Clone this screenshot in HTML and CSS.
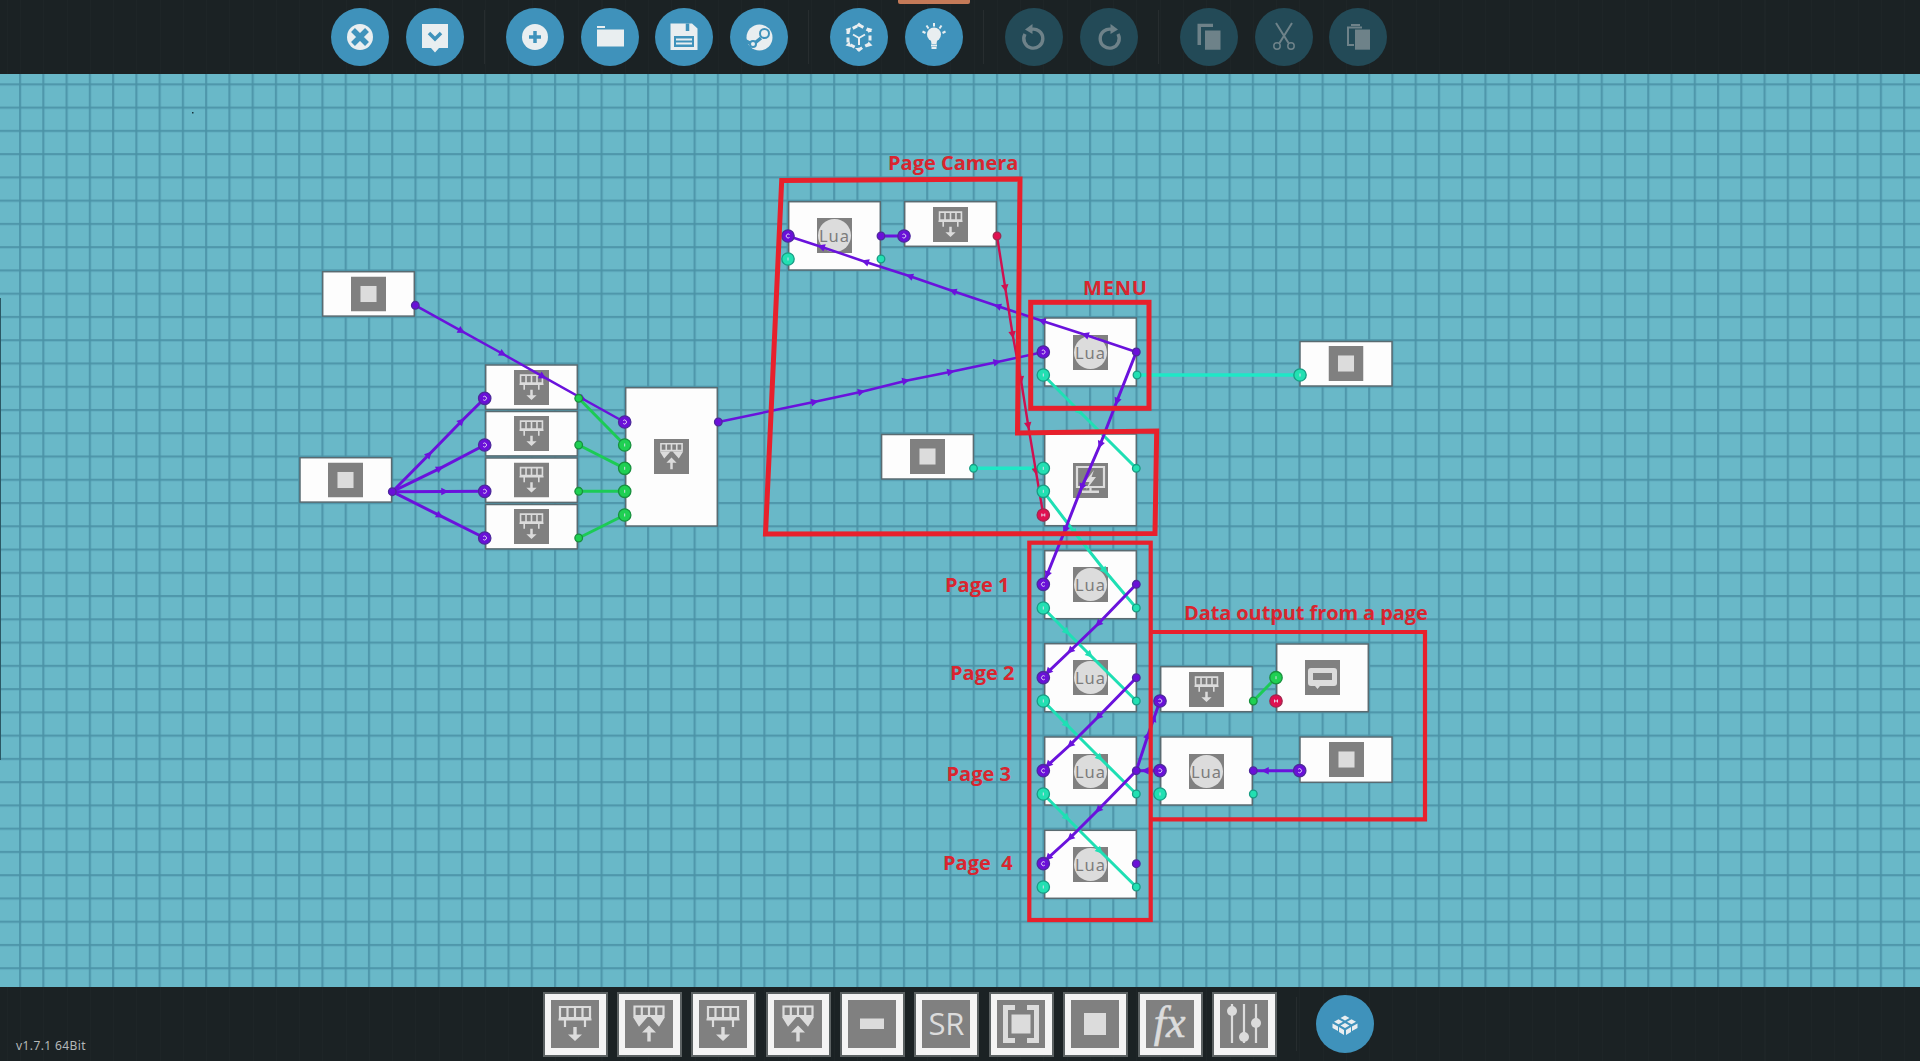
FILE: index.html
```html
<!DOCTYPE html>
<html lang="en">
<head>
<meta charset="utf-8">
<title>Node editor</title>
<link rel="stylesheet" href="styles.css">
</head>
<body>
<svg class="defs" width="0" height="0" aria-hidden="true">
  <defs>
    <symbol id="mem-in" viewBox="0 0 48 48">
      <rect class="ico-bg" width="48" height="48"/>
      <path class="ico-line" d="M9 7H39V18H9ZM16.500 7V18M24 7V18M31.500 7V18M7.500 19.500H40.500M14 19.500V27M34 19.500V27"/>
      <path class="ico-fill" d="M22.300 27H25.700V34.500H31L24 41L17 34.500H22.300Z"/>
    </symbol>
    <symbol id="mem-out" viewBox="0 0 48 48">
      <rect class="ico-bg" width="48" height="48"/>
      <path class="ico-line" d="M9.500 6.500H38.500V16H9.500ZM16.800 6.500V16M24 6.500V16M31.200 6.500V16"/>
      <path class="ico-fill" d="M8 17H22.500L14 26.700ZM25.500 17H40L34 26.700Z"/>
      <path class="ico-fill" d="M24 25.500L31 32.500H25.700V41.500H22.300V32.500H17Z"/>
    </symbol>
    <symbol id="minus" viewBox="0 0 48 48">
      <rect class="ico-bg" width="48" height="48"/>
      <rect class="ico-fill" x="12" y="18.500" width="24" height="10.500"/>
    </symbol>
    <symbol id="bracket" viewBox="0 0 48 48">
      <rect class="ico-bg" width="48" height="48"/>
      <path class="ico-thick" d="M18 7.500H8.500V40.500H18M30 7.500H39.500V40.500H30"/>
      <rect class="ico-fill" x="14.500" y="14.500" width="19" height="19"/>
    </symbol>
    <symbol id="square" viewBox="0 0 48 48">
      <rect class="ico-bg" width="48" height="48"/>
      <rect class="ico-fill" x="13" y="13" width="22" height="22"/>
    </symbol>
    <symbol id="mixer" viewBox="0 0 48 48">
      <rect class="ico-bg" width="48" height="48"/>
      <path class="ico-line" d="M12 4V43M24 4V43M36 4V43"/>
      <circle class="ico-fill" cx="12" cy="11" r="5"/>
      <circle class="ico-fill" cx="24" cy="37" r="5"/>
      <circle class="ico-fill" cx="36" cy="23" r="5"/>
    </symbol>
    <symbol id="lua" viewBox="0 0 35 35">
      <rect class="ico-bg" width="35" height="35"/>
      <circle class="ico-fill" cx="17.500" cy="17.500" r="16.500"/>
      <text class="lua-text" x="17.500" y="23.500">Lua</text>
    </symbol>
    <symbol id="screen" viewBox="0 0 35 35">
      <rect class="ico-bg" width="35" height="35"/>
      <path class="ico-line" d="M4 4H31V24H4ZM17.500 24V28"/>
      <path class="ico-fill" d="M9 27.500H26V30H9ZM21 7L12 19L16.500 19L13 27L23 14H18.500Z"/>
    </symbol>
    <symbol id="chat" viewBox="0 0 35 35">
      <rect class="ico-bg" width="35" height="35"/>
      <path class="ico-fill" d="M6 8H29Q32 8 32 11V23Q32 26 29 26H15L12.500 29L10 26H6Q3 26 3 23V11Q3 8 6 8Z"/>
      <rect class="ico-bg" x="8" y="13" width="19" height="7"/>
    </symbol>
    <marker id="ap" viewBox="0 0 8 8" refX="4" refY="4" markerWidth="10" markerHeight="10" markerUnits="userSpaceOnUse" orient="auto"><path class="m-p" d="M1 1L7 4L1 7Z"/></marker>
    <marker id="at" viewBox="0 0 8 8" refX="4" refY="4" markerWidth="10" markerHeight="10" markerUnits="userSpaceOnUse" orient="auto"><path class="m-t" d="M1 1L7 4L1 7Z"/></marker>
    <marker id="ar" viewBox="0 0 8 8" refX="4" refY="4" markerWidth="10" markerHeight="10" markerUnits="userSpaceOnUse" orient="auto"><path class="m-r" d="M1 1L7 4L1 7Z"/></marker>
    <g id="pb"><circle class="p-p" r="6.200"/><path class="p-mark" d="M-1.500 -1.500A2 2 0 1 1 -1.500 1.500"/></g>
    <g id="pbl"><circle class="p-p" r="6.200"/><path class="p-mark" d="M1.500 -1.500A2 2 0 1 0 1.500 1.500"/></g>
    <g id="ps"><circle class="p-p" r="3.800"/></g>
    <g id="tb"><circle class="p-t" r="6.200"/><path class="p-mark" d="M0 -1.500V1.500"/></g>
    <g id="ts"><circle class="p-t" r="3.800"/></g>
    <g id="gb"><circle class="p-g" r="6.200"/><path class="p-mark" d="M0 -1.500V1.500"/></g>
    <g id="gs"><circle class="p-g" r="3.800"/></g>
    <g id="rb"><circle class="p-r" r="6.200"/><path class="p-mark" d="M-1.500 0H1.500M-1.500 -1.500V1.500M1.500 -1.500V1.500"/></g>
    <g id="rs"><circle class="p-r" r="3.800"/></g>
    <pattern id="grid" patternUnits="userSpaceOnUse" x="19" y="83.300" width="23.260" height="23.260">
      <rect class="grid-bg" x="0" y="0" width="23.260" height="23.260"/>
      <rect class="grid-soft" x="0" y="0" width="2.200" height="23.260"/>
      <rect class="grid-soft" x="0" y="0" width="23.260" height="2.200"/>
    </pattern>
  </defs>
</svg>

<header class="bar top">
  <button class="btn">
    <svg viewBox="0 0 58 58"><circle class="fg" cx="29" cy="29" r="13"/><path class="cut cut-w" d="M22 22L36 36M36 22L22 36"/></svg>
  </button>
  <button class="btn">
    <svg viewBox="0 0 58 58"><path class="fg" d="M16 16H42V40H33L29 44.500L25 40H16Z"/><path class="cut" d="M23 25L29 31L35 25"/></svg>
  </button>
  <span class="sep"></span>
  <button class="btn">
    <svg viewBox="0 0 58 58"><circle class="fg" cx="29" cy="29" r="13"/><path class="cut" d="M29 23V35M23 29H35"/></svg>
  </button>
  <button class="btn">
    <svg viewBox="0 0 58 58"><path class="fg" d="M16 18H24V20H16ZM16 21.500H43V38.500H16Z"/></svg>
  </button>
  <button class="btn">
    <svg viewBox="0 0 58 58"><path class="fg" d="M15.500 15.500H37L42.500 20.500V42H15.500Z"/><path class="cut" d="M32.500 15.500V23"/><rect class="cut-f" x="19" y="28" width="20" height="11"/><path class="fg-line" d="M21 31.500H37M21 35.500H37"/></svg>
  </button>
  <button class="btn">
    <svg viewBox="0 0 58 58"><circle class="fg" cx="29.500" cy="29.500" r="13"/><path class="cut" d="M31 30L23 36.500L14 32"/><circle class="fg cut-ring" cx="34.500" cy="25.500" r="4.500"/><circle class="fg cut-ring" cx="23" cy="36" r="3"/></svg>
  </button>
  <span class="sep"></span>
  <button class="btn">
    <svg viewBox="0 0 58 58"><path class="fg-line dash" d="M29 17L40 23V35.500L29 41.500L18 35.500V23Z"/><path class="fg-line" d="M29 30V37M29 30L23 26.500M29 30L35 26.500"/><path class="fg" d="M29 14.500L33 18.500H25ZM29 44L25 40H33ZM15.500 21L21 19.500L19.500 25ZM42.500 21L37 19.500L38.500 25ZM15.500 37.500L21 39L19.500 33.500ZM42.500 37.500L37 39L38.500 33.500Z"/></svg>
  </button>
  <button class="btn active">
    <svg viewBox="0 0 58 58"><circle class="fg" cx="29" cy="26.500" r="7"/><path class="fg" d="M25.500 30H32.500L31.500 36H26.500Z"/><path class="fg-line" d="M26 37.500H32M26.500 40H31.500M29 15V18.500M21.500 17.500L23.500 20.500M36.500 17.500L34.500 20.500M17.500 23.500L20.500 25M40.500 23.500L37.500 25"/></svg>
  </button>
  <span class="sep"></span>
  <button class="btn off">
    <svg viewBox="0 0 58 58"><path class="fg-stroke" d="M26 21.400A9.500 9.500 0 1 1 20 26"/><path class="fg" d="M20 21.500L27.500 16V26Z"/></svg>
  </button>
  <button class="btn off">
    <svg class="flip" viewBox="0 0 58 58"><path class="fg-stroke" d="M26 21.400A9.500 9.500 0 1 1 20 26"/><path class="fg" d="M20 21.500L27.500 16V26Z"/></svg>
  </button>
  <span class="sep"></span>
  <button class="btn off">
    <svg viewBox="0 0 58 58"><path class="fg" d="M17.500 15.700H33V19H21V37H17.500ZM25 22.500H40.500V41.700H25Z"/></svg>
  </button>
  <button class="btn off">
    <svg viewBox="0 0 58 58"><path class="fg-line" d="M21 15L33.500 35M37 15L24.500 35"/><circle class="ring" cx="22" cy="38" r="3.200"/><circle class="ring" cx="36" cy="38" r="3.200"/></svg>
  </button>
  <button class="btn off">
    <svg viewBox="0 0 58 58"><path class="fg-line" d="M25 37H19V19.500H33M22 17H31"/><path class="fg" d="M26 21.500H41V41.700H26Z"/></svg>
  </button>
</header>

<main class="canvas">
  <svg class="board" viewBox="0 74 1920 913" width="1920" height="913">
    <rect x="0" y="74" width="1920" height="913" fill="url(#grid)"/>
    <rect class="edge" x="0" y="298" width="1" height="462"/>
    <rect class="speck" x="192" y="112" width="1.500" height="1.500"/>

    <g class="nodes">
      <rect class="node" x="322.700" y="271.700" width="91.600" height="44.400"/>
      <rect class="node" x="300" y="457.700" width="91.600" height="44.400"/>
      <rect class="node" x="485.700" y="365" width="91.600" height="44.400"/>
      <rect class="node" x="485.700" y="411.500" width="91.600" height="44.400"/>
      <rect class="node" x="485.700" y="458" width="91.600" height="44.400"/>
      <rect class="node" x="485.700" y="504.500" width="91.600" height="44.400"/>
      <rect class="node" x="625.700" y="387.700" width="91.600" height="138.300"/>
      <rect class="node" x="788.700" y="201.700" width="91.600" height="68.300"/>
      <rect class="node" x="904.700" y="201.700" width="91.600" height="44.600"/>
      <rect class="node" x="1044.700" y="318" width="91.600" height="68"/>
      <rect class="node" x="1300" y="341.500" width="92" height="44.500"/>
      <rect class="node" x="881.600" y="434.500" width="91.800" height="44.500"/>
      <rect class="node" x="1044.700" y="434" width="91.600" height="91.700"/>
      <rect class="node" x="1044.700" y="550.700" width="91.600" height="68"/>
      <rect class="node" x="1044.700" y="643.700" width="91.600" height="68"/>
      <rect class="node" x="1044.700" y="737" width="91.600" height="68"/>
      <rect class="node" x="1044.700" y="830.300" width="91.600" height="68"/>
      <rect class="node" x="1160.700" y="666.700" width="91.600" height="45"/>
      <rect class="node" x="1160.700" y="737" width="91.600" height="68"/>
      <rect class="node" x="1300" y="737" width="92" height="45.300"/>
      <rect class="node" x="1276.700" y="644" width="91.600" height="67.700"/>

      <use href="#square" x="351" y="276.500" width="35" height="35"/>
      <use href="#square" x="328" y="462.500" width="35" height="35"/>
      <use href="#mem-in" x="514" y="370" width="35" height="35"/>
      <use href="#mem-in" x="514" y="416" width="35" height="35"/>
      <use href="#mem-in" x="514" y="462.500" width="35" height="35"/>
      <use href="#mem-in" x="514" y="509" width="35" height="35"/>
      <use href="#mem-out" x="654" y="439" width="35" height="35"/>
      <use href="#lua" x="817" y="218" width="35" height="35"/>
      <use href="#mem-in" x="933" y="207" width="35" height="35"/>
      <use href="#lua" x="1073" y="335" width="35" height="35"/>
      <use href="#square" x="1328.500" y="346" width="35" height="35"/>
      <use href="#square" x="910" y="439" width="35" height="35"/>
      <use href="#screen" x="1073" y="463" width="35" height="35"/>
      <use href="#lua" x="1073" y="567" width="35" height="35"/>
      <use href="#lua" x="1073" y="660" width="35" height="35"/>
      <use href="#lua" x="1073" y="754" width="35" height="35"/>
      <use href="#lua" x="1073" y="847" width="35" height="35"/>
      <use href="#mem-in" x="1189" y="672" width="35" height="35"/>
      <use href="#lua" x="1189" y="754" width="35" height="35"/>
      <use href="#square" x="1329" y="742" width="35" height="35"/>
      <use href="#chat" x="1305" y="660" width="35" height="35"/>
    </g>

    <g class="wires">
      <polyline class="w-t" marker-mid="url(#at)" points="1043.300,375 1080,412 1136.300,468.300"/>
      <polyline class="w-t" marker-mid="url(#at)" points="1043.300,491.300 1075,533 1105,571 1136.300,608"/>
      <polyline class="w-t" marker-mid="url(#at)" points="1043.300,608 1067,632 1090,655 1136.300,701"/>
      <polyline class="w-t" marker-mid="url(#at)" points="1043.300,701 1067,725 1100,758 1136.300,794"/>
      <polyline class="w-t" marker-mid="url(#at)" points="1043.300,794 1067,818 1100,851 1136.300,887"/>
      <polyline class="w-c" points="1137,375 1300,375"/>
      <polyline class="w-c" marker-mid="url(#at)" points="974,468.300 1036,468.300 1043.300,468.300"/>
      <polyline class="w-g" points="578.700,398.300 624.700,445"/>
      <polyline class="w-g" points="578.700,445 624.700,468.300"/>
      <polyline class="w-g" points="578.700,491.300 624.700,491.300"/>
      <polyline class="w-g" points="578.700,538 624.700,515"/>
      <polyline class="w-g" points="1253.300,701 1276,677.700"/>
      <polyline class="w-p thin-w" marker-mid="url(#ap)" points="415.300,305.300 461.700,331.200 503,354 543,376.700 583,399 624.300,422"/>
      <polyline class="w-p" marker-mid="url(#ap)" points="392.300,491.700 429.300,454.300 461.700,421 484.700,398.300"/>
      <polyline class="w-p" marker-mid="url(#ap)" points="392.300,491.700 440,468.300 484.700,445"/>
      <polyline class="w-p" marker-mid="url(#ap)" points="392.300,491.700 445,491.500 484.700,491.300"/>
      <polyline class="w-p" marker-mid="url(#ap)" points="392.300,491.700 440,515.700 484.700,538"/>
      <polyline class="w-p thin-w" marker-mid="url(#ap)" points="718.300,422 815,401.700 861.700,391.700 906,380.700 951,371.700 997.300,362 1043.300,352"/>
      <polyline class="w-p thin-w" marker-mid="url(#ap)" points="1136.300,352 1085,334.700 1041.700,320.700 997.300,306 952.700,291 909.300,276 865,261.700 821,246.700 788,236"/>
      <polyline class="w-p" points="881,236 904,236"/>
      <polyline class="w-r" marker-mid="url(#ar)" points="997,236 1005.300,288.300 1012.700,335 1021,380 1028.300,426 1036,471.700 1043.300,515"/>
      <polyline class="w-p" marker-mid="url(#ap)" points="1136.300,352 1116.700,401.700 1100,445 1081.700,487.300 1065,530 1047,575 1043.300,584.300"/>
      <polyline class="w-p" marker-mid="url(#ap)" points="1136.300,584.300 1098,624 1070,651 1048,672 1043.300,677.700"/>
      <polyline class="w-p" marker-mid="url(#ap)" points="1136.300,677.700 1098,717 1070,745 1048,765 1043.300,770.700"/>
      <polyline class="w-p" marker-mid="url(#ap)" points="1136.300,770.700 1098,810 1070,838 1048,858 1043.300,863.700"/>
      <polyline class="w-p" marker-mid="url(#ap)" points="1160,770.700 1145,770.700 1136.300,770.700"/>
      <polyline class="w-p" marker-mid="url(#ap)" points="1136.300,770.700 1148,735 1154,718 1160,701"/>
      <polyline class="w-p" marker-mid="url(#ap)" points="1300,770.700 1265,770.700 1253.300,770.700"/>
    </g>

    <g class="pins">
      <use href="#ps" x="415.300" y="305.300"/>
      <use href="#ps" x="392.300" y="491.700"/>
      <use href="#pb" x="484.700" y="398.300"/><use href="#pb" x="484.700" y="445"/><use href="#pb" x="484.700" y="491.300"/><use href="#pb" x="484.700" y="538"/>
      <use href="#gs" x="578.700" y="398.300"/><use href="#gs" x="578.700" y="445"/><use href="#gs" x="578.700" y="491.300"/><use href="#gs" x="578.700" y="538"/>
      <use href="#pb" x="624.700" y="422"/>
      <use href="#gb" x="624.700" y="445"/><use href="#gb" x="624.700" y="468.300"/><use href="#gb" x="624.700" y="491.300"/><use href="#gb" x="624.700" y="515"/>
      <use href="#ps" x="718.300" y="422"/>
      <use href="#pbl" x="788" y="236"/><use href="#tb" x="788" y="259"/>
      <use href="#ps" x="881" y="236"/><use href="#ts" x="881" y="259"/>
      <use href="#pb" x="904" y="236"/><use href="#rs" x="997" y="236"/>
      <use href="#pb" x="1043.300" y="352"/><use href="#tb" x="1043.300" y="375"/>
      <use href="#ps" x="1136.300" y="352"/><use href="#ts" x="1137" y="375"/>
      <use href="#tb" x="1300" y="375"/>
      <use href="#ts" x="973.500" y="468.300"/>
      <use href="#tb" x="1043.300" y="468.300"/><use href="#tb" x="1043.300" y="491.300"/><use href="#rb" x="1043.300" y="515"/>
      <use href="#ts" x="1136.300" y="468.300"/>
      <use href="#pbl" x="1043.300" y="584.300"/><use href="#tb" x="1043.300" y="608"/><use href="#ps" x="1136.300" y="584.300"/><use href="#ts" x="1136.300" y="608"/>
      <use href="#pbl" x="1043.300" y="677.700"/><use href="#tb" x="1043.300" y="701"/><use href="#ps" x="1136.300" y="677.700"/><use href="#ts" x="1136.300" y="701"/>
      <use href="#pbl" x="1043.300" y="770.700"/><use href="#tb" x="1043.300" y="794"/><use href="#ps" x="1136.300" y="770.700"/><use href="#ts" x="1136.300" y="794"/>
      <use href="#pbl" x="1043.300" y="863.700"/><use href="#tb" x="1043.300" y="887"/><use href="#ps" x="1136.300" y="863.700"/><use href="#ts" x="1136.300" y="887"/>
      <use href="#pb" x="1160" y="701"/><use href="#gs" x="1253.300" y="701"/>
      <use href="#pb" x="1160" y="770.700"/><use href="#tb" x="1160" y="794"/><use href="#ps" x="1253.300" y="770.700"/><use href="#ts" x="1253.300" y="794"/>
      <use href="#pb" x="1299.700" y="770.700"/>
      <use href="#gb" x="1276" y="677.700"/><use href="#rb" x="1276" y="701"/>
    </g>

    <g class="notes">
      <path class="note wide" d="M781.700 180.500L1020 179L1017.500 433L1156.700 431L1155 533.500L765.500 534Z"/>
      <rect class="note wide" x="1030.700" y="302.300" width="118.300" height="106"/>
      <rect class="note" x="1029.300" y="542.700" width="121.400" height="377.300"/>
      <path class="note" d="M1150.700 632H1425V819.300H1150.700"/>
      <text class="label" x="888" y="170">Page Camera</text>
      <text class="label label-wide" x="1083" y="295">MENU</text>
      <text class="label label-tight" x="1184" y="620">Data output from a page</text>
      <text class="label" x="945" y="592">Page 1</text>
      <text class="label" x="950" y="680">Page 2</text>
      <text class="label" x="946.500" y="781">Page 3</text>
      <text class="label" x="943" y="870" xml:space="preserve">Page  4</text>
    </g>
  </svg>
</main>

<footer class="bar bottom">
  <span class="version">v1.7.1 64Bit</span>
  <div class="tiles">
    <div class="tile"><svg class="tile-in"><use href="#mem-in"/></svg></div>
    <div class="tile"><svg class="tile-in"><use href="#mem-out"/></svg></div>
    <div class="tile"><svg class="tile-in"><use href="#mem-in"/></svg></div>
    <div class="tile"><svg class="tile-in"><use href="#mem-out"/></svg></div>
    <div class="tile"><svg class="tile-in"><use href="#minus"/></svg></div>
    <div class="tile"><div class="tile-in tile-sr">SR</div></div>
    <div class="tile"><svg class="tile-in"><use href="#bracket"/></svg></div>
    <div class="tile"><svg class="tile-in"><use href="#square"/></svg></div>
    <div class="tile"><div class="tile-in tile-fx">fx</div></div>
    <div class="tile"><svg class="tile-in"><use href="#mixer"/></svg></div>
  </div>
  <span class="sep sep-b"></span>
  <button class="btn">
    <svg viewBox="0 0 58 58"><path class="fg" d="M29 20.500L33.500 23L29 25.500L24.500 23ZM22.500 24.300L27 26.800L22.500 29.300L18 26.800ZM35.500 24.300L40 26.800L35.500 29.300L31 26.800ZM29 28L33.500 30.500L29 33L24.500 30.500Z"/><path class="fg" d="M16.500 28.500L22 31.500V36L16.500 33ZM23 32L28 35V40L23 37ZM30 35L35 32V37L30 40ZM36 31.500L41.500 28.500V33L36 36Z"/></svg>
  </button>
</footer>
</body>
</html>
```
FILE: styles.css
```css
* { box-sizing: border-box; }
html, body { margin: 0; height: 100%; }
body {
  display: flex;
  flex-direction: column;
  overflow: hidden;
  background: #1b2224;
  font-family: "Open Sans", "Noto Sans", sans-serif;
}
.defs { position: absolute; }

.bar {
  flex: 0 0 74px;
  display: flex;
  align-items: center;
  background-color: #1b2224;
  background-image: repeating-linear-gradient(90deg, rgba(255,255,255,.012) 0 1px, transparent 1px 23.26px);
  background-position: 20px 0;
}
.top { padding-left: 331px; gap: 16.500px; }
.bottom { padding-left: 16px; }

.btn {
  position: relative;
  flex: none;
  width: 58px;
  height: 58px;
  padding: 0;
  border: 0;
  border-radius: 50%;
  background: #3f92bb;
  --ink: #e9eef0;
  --back: #3f92bb;
}
.btn svg { display: block; width: 58px; height: 58px; }
.btn.off { background: #234a57; --ink: #6e8289; --back: #234a57; }
.btn.active::before {
  content: "";
  position: absolute;
  left: -7px;
  right: -7px;
  top: -8px;
  height: 4px;
  border-radius: 0 0 2px 2px;
  background: #c47a58;
}
.flip { transform: scaleX(-1); }
.fg { fill: var(--ink); }
.fg-line { fill: none; stroke: var(--ink); stroke-width: 2; }
.fg-stroke { fill: none; stroke: var(--ink); stroke-width: 3.400; }
.dash { stroke-width: 3; stroke-dasharray: 5 3.500; }
.ring { fill: none; stroke: var(--ink); stroke-width: 1.500; }
.cut { fill: none; stroke: var(--back); stroke-width: 3.500; }
.cut-w { stroke-width: 5.500; }
.cut-f { fill: var(--back); }
.cut-ring { stroke: var(--back); stroke-width: 2; }
.sep { flex: none; width: 1px; height: 54px; background: #272d2f; margin: 0 4.250px; }

.canvas { flex: 1 1 auto; min-height: 0; }
.board { display: block; }
.grid-bg { fill: #69b8c8; }
.grid-soft { fill: #4a92a6; fill-opacity: .85; }
.edge { fill: #2b5764; }
.speck { fill: #16323a; }

.node { fill: #fdfdfd; stroke: #5a6b71; stroke-width: 1.500; }
.ico-bg { fill: #808080; }
.ico-fill { fill: #dcdcdc; }
.ico-line { fill: none; stroke: #dcdcdc; stroke-width: 2.200; }
.ico-thick { fill: none; stroke: #dcdcdc; stroke-width: 5; }
.lua-text {
  fill: #7c7c7c;
  font: 400 16.500px "Noto Sans", sans-serif;
  letter-spacing: 1px;
  text-anchor: middle;
}

.wires polyline { fill: none; }
.w-p { stroke: #6a12dc; stroke-width: 3; }
.thin-w { stroke-width: 2.500; }
.w-t { stroke: #1fdfb4; stroke-width: 3; }
.w-c { stroke: #1ee8c6; stroke-width: 3.500; }
.w-g { stroke: #1ccb55; stroke-width: 3; }
.w-r { stroke: #cf1050; stroke-width: 2.400; }
.m-p { fill: #6a12dc; }
.m-t { fill: #1fdfb4; }
.m-r { fill: #cf1050; }

.p-p { fill: #6a10d8; stroke: #4d2a9c; stroke-width: 1.300; }
.p-t { fill: #22e0b2; stroke: #189c84; stroke-width: 1.300; }
.p-g { fill: #1fd052; stroke: #18903e; stroke-width: 1.300; }
.p-r { fill: #e01050; stroke: #a0284f; stroke-width: 1.300; }
.p-mark { fill: none; stroke: #e6e0f5; stroke-width: .9; }

.note { fill: none; stroke: #e8202c; stroke-width: 4.200; }
.note.wide { stroke-width: 5; }
.label {
  fill: #d9252f;
  font: 700 20px "Open Sans", sans-serif;
  white-space: pre;
}
.label-wide { letter-spacing: .8px; }
.label-tight { letter-spacing: -.1px; }

.version {
  flex: 0 0 526.500px;
  align-self: flex-end;
  margin-bottom: 7px;
  color: #b4b8b8;
  font: 400 12px "Noto Sans", sans-serif;
  letter-spacing: .4px;
}
.tiles { display: flex; gap: 9.400px; }
.tile {
  width: 65px;
  height: 65px;
  border: 2.500px solid #5c6263;
  background: #f4f4f4;
  padding: 6px;
}
.tile-in {
  display: block;
  width: 48px;
  height: 48px;
  background: #808080;
  color: #dcdcdc;
  text-align: center;
}
.tile-sr { font: 400 31px/47px "Open Sans", sans-serif; }
.tile-fx {
  font: italic 400 44px/46px "Liberation Serif", serif;
  -webkit-text-stroke: .6px #dcdcdc;
}
.sep-b { margin: 0 19.500px 0 18.500px; }
```
